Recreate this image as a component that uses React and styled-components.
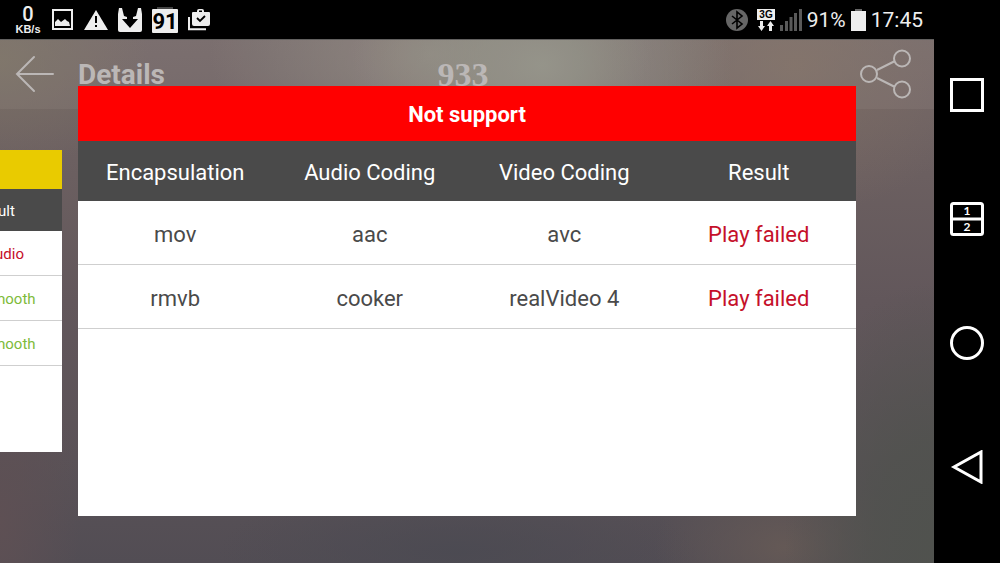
import React from 'react';
import styled, { createGlobalStyle } from 'styled-components';

const GlobalStyle = createGlobalStyle`
*{
    box-sizing: border-box;
}
body{
    margin: 0;
    background: #000;
    font-family: Roboto, "Liberation Sans", sans-serif;
}
`

const Screen = styled.div`
display: flex;
min-height: 100vh;
background: #000;
`
const Main = styled.div`
flex: 1;
min-width: 0;
display: flex;
flex-direction: column;
`
const StatusBar = styled.div`
display: flex;
justify-content: space-between;
height: 39px;
padding: 0 11px 0 14px;
color: #eee;
`
const StatusGroup = styled.div`
display: flex;
align-items: center;
gap: ${props => props.$gap}px;
font-size: 21px;
svg{
    display: block;
    flex: none;
}
`
const Speed = styled.div`
width: 28px;
text-align: center;
font-family: "Liberation Sans", sans-serif;
font-weight: bold;
font-size: 11px;
line-height: 11px;
white-space: nowrap;
`
const SpeedValue = styled.div`
font-family: Roboto, sans-serif;
font-weight: 500;
font-size: 20px;
line-height: 20px;
`

const Content = styled.div`
flex: 1;
position: relative;
overflow: hidden;
background:
    radial-gradient(ellipse 190px 150px at 58% 5%, rgba(146, 146, 134, 0.9), rgba(146, 146, 134, 0) 100%),
    radial-gradient(ellipse 220px 120px at 46% 3%, rgba(142, 134, 126, 0.8), rgba(142, 134, 126, 0) 100%),
    radial-gradient(ellipse 190px 150px at 85% 5%, rgba(130, 112, 100, 0.7), rgba(130, 112, 100, 0) 100%),
    radial-gradient(ellipse 150px 110px at 0 4%, rgba(124, 114, 100, 0.8), rgba(124, 114, 100, 0) 100%),
    radial-gradient(ellipse 150px 260px at 100% 96%, rgba(80, 82, 78, 1), rgba(80, 82, 78, 0.8) 40%, rgba(80, 82, 78, 0) 100%),
    radial-gradient(ellipse 130px 80px at 84% 97%, rgba(102, 90, 86, 0.9), rgba(102, 90, 86, 0) 100%),
    radial-gradient(ellipse 240px 70px at 49% 98%, rgba(75, 74, 82, 0.9), rgba(75, 74, 82, 0) 100%),
    radial-gradient(ellipse 80px 200px at 0 92%, rgba(94, 80, 84, 1), rgba(94, 80, 84, 0) 100%),
    linear-gradient(#746868, #6b5f60 26%, #62575b 50%, #5a5257 80%, #524d54);
`
const Header = styled.header`
display: grid;
grid-template-columns: 1fr auto 1fr;
align-items: center;
height: 70px;
padding: 0 20px 0 12px;
background: rgba(255, 255, 255, 0.05);
border-top: 1px solid #62605f;
color: #bbb7b6;
`
const HeaderLeft = styled.div`
display: flex;
align-items: center;
gap: 22px;
`
const HeaderTitle = styled.h1`
margin: 0;
font-size: 28px;
line-height: 38px;
`
const Score = styled.div`
font: bold 34px/36px "Liberation Serif", serif;
`
const IconButton = styled.button`
display: block;
justify-self: ${props => props.$end ? 'end' : 'start'};
padding: 0;
border: 0;
background: none;
color: inherit;
cursor: pointer;
svg{
    display: block;
}
`

/* cards slide over the header, the active one is centred */
const Carousel = styled.div`
position: absolute;
inset: 0;
display: flex;
align-items: center;
justify-content: flex-end;
gap: 16px;
padding: 0 78px;
pointer-events: none;
`
const Card = styled.section`
flex: none;
width: ${props => props.$small ? '136px' : '100%'};
min-height: ${props => props.$small ? 302 : 430}px;
font-size: ${props => props.$small ? 15 : 22}px;
background: #fff;
pointer-events: auto;
`
const CardTitle = styled.h2`
margin: 0;
height: ${props => props.$small ? 39 : 55}px;
line-height: 57px;
font-size: inherit;
text-align: center;
color: #fff;
background: ${props => props.$color};
`
const Table = styled.table`
width: 100%;
table-layout: fixed;
border-spacing: 0;
text-align: center;

th{
    height: ${props => props.$small ? 42 : 60}px;
    padding: 2px 0 0;
    font-weight: 400;
    color: #fff;
    background: #4a4a4a;
}
td{
    height: ${props => props.$small ? 45 : 64}px;
    padding: ${props => props.$small ? 2 : 3}px 0 0;
    color: #4a4a4a;
    border-bottom: 1px solid #cfcfcf;
}
`
const Result = styled.td`
&&{
    color: ${props => props.$ok ? '#7ebb3a' : '#c5102a'};
}
`

const NavBar = styled.nav`
flex: none;
width: 66px;
display: flex;
flex-direction: column;
align-items: center;
justify-content: space-between;
padding: 78px 0 79px;
color: #fff;
`

const PictureIcon = () => (
    <svg width='22' height='22' viewBox='0 0 22 22'>
        <rect x='1' y='1' width='19' height='19' fill='none' stroke='#eee' strokeWidth='2' />
        <path d='M3 17v-4l3-3 1 1 2 2 4-3 2 2 2 1 1 4z' fill='#eee' />
    </svg>
)
const WarningIcon = () => (
    <svg width='24' height='20' viewBox='0 0 24 20'>
        <path d='M12 0l12 20H0z' fill='#eee' />
        <path d='M12 6v7M12 15v2' stroke='#000' strokeWidth='2' />
    </svg>
)
const DownloadIcon = () => (
    <svg width='24' height='24' viewBox='0 0 24 24'>
        <path d='M1 0h22l1 6v16q0 2-2 2H2q-2 0-2-2V6z' fill='#eee' />
        <path d='M4 0l2 8 3 1v2H4l8 9 8-9h-5V9l3-1 2-8z' fill='#000' />
    </svg>
)
const BatteryLevelIcon = () => (
    <svg width='26' height='26' viewBox='0 0 26 26'>
        <path d='M5 1h16' stroke='#444' strokeWidth='2' />
        <rect y='2' width='26' height='24' rx='1' fill='#eee' />
        <text x='13' y='22' textAnchor='middle' fontFamily='Roboto, sans-serif' fontWeight='bold' fontSize='22' fill='#000'>91</text>
    </svg>
)
const CaseIcon = () => (
    <svg width='22' height='22' viewBox='0 0 22 22'>
        <path d='M1 8v12.200h17' fill='none' stroke='#eee' strokeWidth='2' />
        <path fillRule='evenodd' d='M9 3V2q0-2 2-2h3q2 0 2 2v1h5q1 0 1 1v11q0 2-2 2H6q-2 0-2-2V4q0-1 1-1zM11 3h3V1.500h-3z' fill='#eee' />
        <path d='M9 9l3 3 5-5' fill='none' stroke='#000' strokeWidth='1.800' />
    </svg>
)
const BluetoothIcon = () => (
    <svg width='26' height='24' viewBox='0 0 26 24'>
        <circle cx='11' cy='12' r='11' fill='#666' />
        <path d='M6 8l10 8-5 4V4l5 4-10 8' fill='none' stroke='#000' strokeWidth='1.600' />
    </svg>
)
const NetworkIcon = () => (
    <svg width='18' height='22' viewBox='0 0 18 22'>
        <rect width='18' height='11' fill='#eee' />
        <text x='9' y='9' textAnchor='middle' fontFamily='Liberation Sans, sans-serif' fontWeight='bold' fontSize='10' fill='#000'>3G</text>
        <path d='M3 12h3v5h2l-3.500 5L1 17h2zM12 22h3v-5h2l-3.500-5-3.500 5h2z' fill='#eee' />
    </svg>
)
const SignalIcon = () => (
    <svg width='22' height='22' viewBox='0 0 22 22'>
        <path d='M0 16h3v6H0zM5 12h3v10H5zM9.500 8h3v14h-3zM14 4h3v18h-3zM19 0h3v22h-3z' fill='#595959' />
    </svg>
)
const BatteryIcon = () => (
    <svg width='15' height='22' viewBox='0 0 15 22'>
        <path d='M4 0h7v2H4z' fill='#666' />
        <rect y='2' width='15' height='20' fill='#eee' />
    </svg>
)
const BackArrow = () => (
    <svg width='44' height='44' viewBox='0 0 44 44' fill='none' stroke='currentColor' strokeWidth='2' strokeLinecap='round'>
        <path d='M41 21H5M22 4L5 21l17 17' />
    </svg>
)
const ShareIcon = () => (
    <svg width='54' height='52' viewBox='0 0 54 52' fill='none' stroke='currentColor' strokeWidth='2'>
        <circle cx='9' cy='25' r='8' />
        <circle cx='42' cy='9.500' r='8' />
        <circle cx='42' cy='40.500' r='8' />
        <path d='M17 21l18-9M17 29l18 9' />
    </svg>
)

const navIcons = [
    {
        name: 'Recent apps',
        icon: <rect x='1.500' y='1.500' width='31' height='31' />
    },
    {
        name: 'Split screen',
        icon: <>
            <rect x='1.500' y='1.500' width='31' height='31' rx='2' />
            <path d='M2 17h30' />
            <text x='17' y='13' textAnchor='middle' fontFamily='Lato, sans-serif' fontWeight='bold' fontSize='12' fill='currentColor' stroke='none'>1</text>
            <text x='17' y='29' textAnchor='middle' fontFamily='Lato, sans-serif' fontWeight='bold' fontSize='12' fill='currentColor' stroke='none'>2</text>
        </>
    },
    {
        name: 'Home',
        icon: <circle cx='17' cy='17' r='15.500' />
    },
    {
        name: 'Back',
        icon: <path d='M31 2v30L4 17z' />
    },
]

const columns = ['Encapsulation', 'Audio Coding', 'Video Coding', 'Result']
const unsupported = [
    ['mov', 'aac', 'avc', 'Play failed'],
    ['rmvb', 'cooker', 'realVideo 4', 'Play failed'],
]
const partial = [
    { text: 'No audio', ok: false },
    { text: 'Play smooth', ok: true },
    { text: 'Play smooth', ok: true },
]

const App = () => {
    return <>
        <GlobalStyle />
        <Screen>
            <Main>
                <StatusBar>
                    <StatusGroup $gap={10}>
                        <Speed><SpeedValue>0</SpeedValue>KB/s</Speed>
                        <PictureIcon />
                        <WarningIcon />
                        <DownloadIcon />
                        <BatteryLevelIcon />
                        <CaseIcon />
                    </StatusGroup>
                    <StatusGroup $gap={5}>
                        <BluetoothIcon />
                        <NetworkIcon />
                        <SignalIcon />
                        <span>91%</span>
                        <BatteryIcon />
                        <span>17:45</span>
                    </StatusGroup>
                </StatusBar>
                <Content>
                    <Header>
                        <HeaderLeft>
                            <IconButton aria-label='Back'><BackArrow /></IconButton>
                            <HeaderTitle>Details</HeaderTitle>
                        </HeaderLeft>
                        <Score>933</Score>
                        <IconButton $end aria-label='Share'><ShareIcon /></IconButton>
                    </Header>
                    <Carousel>
                        <Card $small>
                            <CardTitle as='div' $small $color='#e9cb00' />
                            <Table $small>
                                <thead>
                                    <tr><th>Result</th></tr>
                                </thead>
                                <tbody>
                                {partial.map((item, i) => (
                                    <tr key={i}><Result $ok={item.ok}>{item.text}</Result></tr>
                                ))}
                                </tbody>
                            </Table>
                        </Card>
                        <Card>
                            <CardTitle $color='#ff0000'>Not support</CardTitle>
                            <Table>
                                <thead>
                                    <tr>{columns.map(name => <th key={name}>{name}</th>)}</tr>
                                </thead>
                                <tbody>
                                {unsupported.map(([format, audio, video, result]) => (
                                    <tr key={format}>
                                        <td>{format}</td>
                                        <td>{audio}</td>
                                        <td>{video}</td>
                                        <Result>{result}</Result>
                                    </tr>
                                ))}
                                </tbody>
                            </Table>
                        </Card>
                    </Carousel>
                </Content>
            </Main>
            <NavBar>
                {navIcons.map(({ name, icon }) => (
                    <IconButton key={name} aria-label={name}>
                        <svg width='34' height='34' viewBox='0 0 34 34' fill='none' stroke='currentColor' strokeWidth='3'>{icon}</svg>
                    </IconButton>
                ))}
            </NavBar>
        </Screen>
    </>
}

export default App
